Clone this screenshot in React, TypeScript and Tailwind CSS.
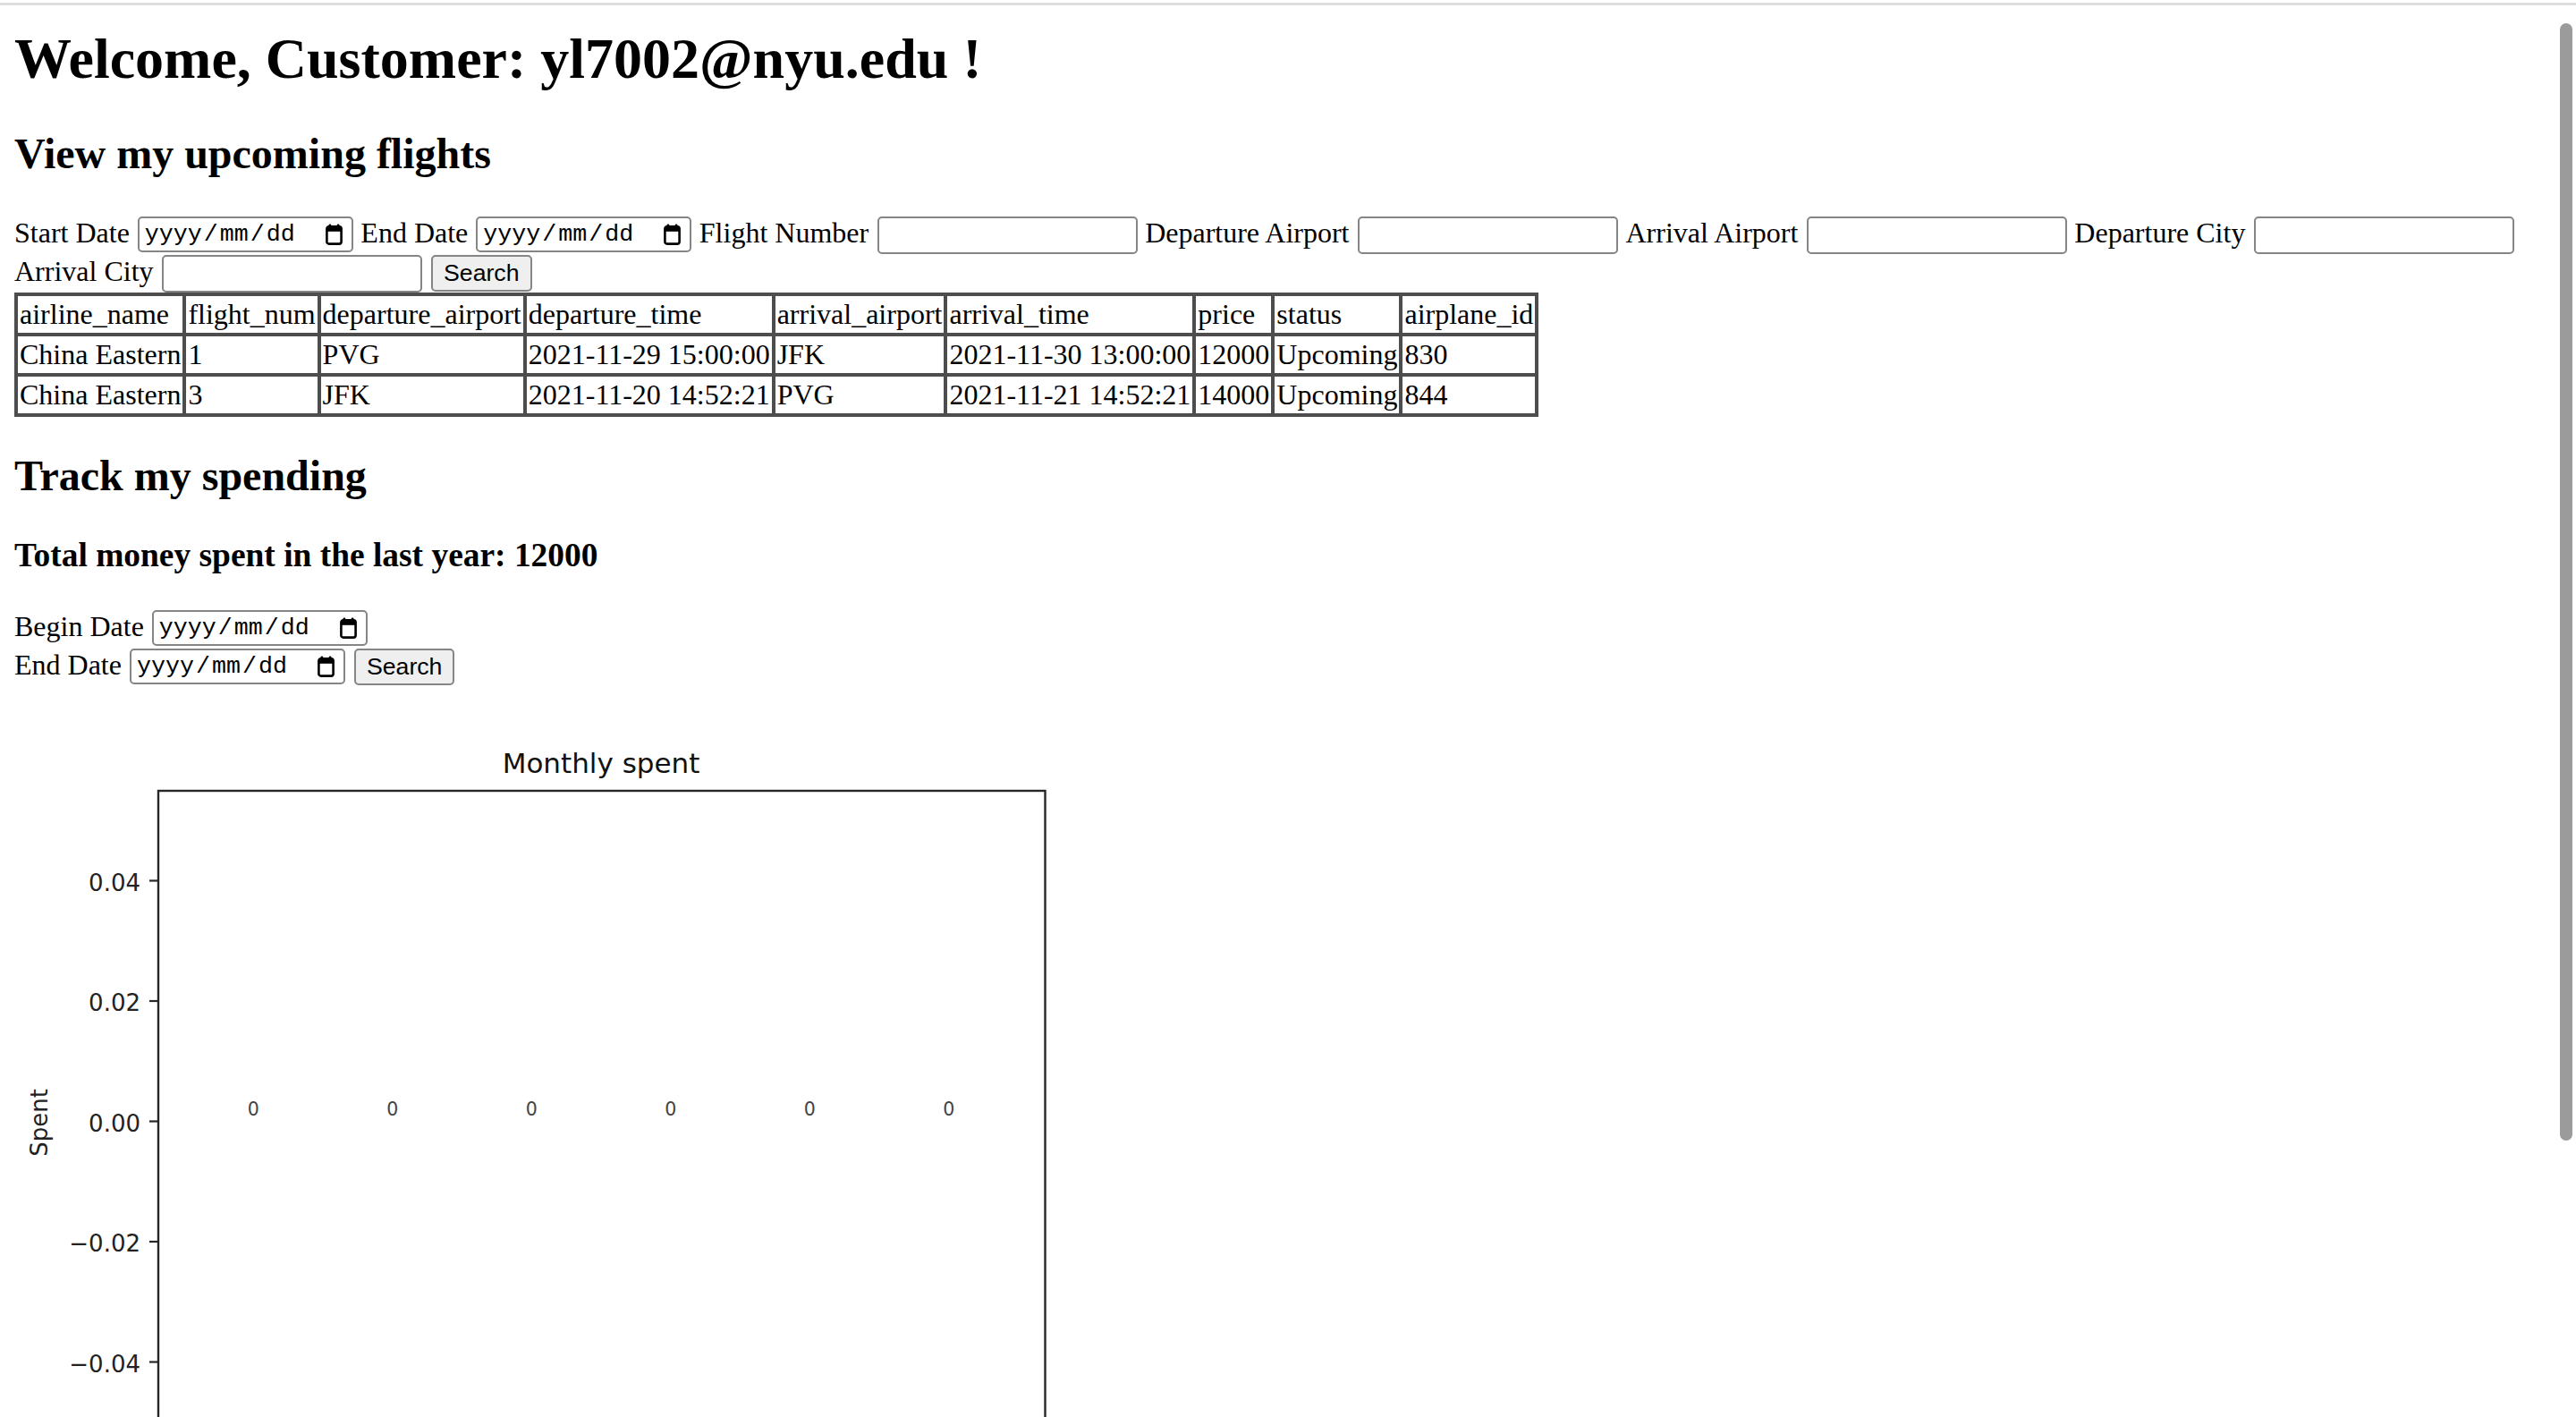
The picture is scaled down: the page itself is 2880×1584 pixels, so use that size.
import React from 'react';

const tableRows = [
  ['airline_name', 'flight_num', 'departure_airport', 'departure_time', 'arrival_airport', 'arrival_time', 'price', 'status', 'airplane_id'],
  ['China Eastern', '1', 'PVG', '2021-11-29 15:00:00', 'JFK', '2021-11-30 13:00:00', '12000', 'Upcoming', '830'],
  ['China Eastern', '3', 'JFK', '2021-11-20 14:52:21', 'PVG', '2021-11-21 14:52:21', '14000', 'Upcoming', '844'],
];

function Label({ text, first }: { text: string; first?: boolean }) {
  return <span className={`${first ? '' : 'ml-[8.5px]'} whitespace-nowrap leading-[36px]`}>{text}</span>;
}

function DateBox() {
  return (
    <div className="ml-[9px] flex h-[40px] w-[241px] shrink-0 items-center rounded-[5px] border-2 border-[#858585] pl-[6px] pr-[10px] font-['Liberation_Mono',monospace] text-[26.67px] text-black">
      <span>yyyy</span>
      <span className="mx-[2px]">/</span>
      <span>mm</span>
      <span className="mx-[2px]">/</span>
      <span>dd</span>
      <svg width="19" height="24" viewBox="0 0 19 24" className="ml-auto">
        <rect x="3.6" y="0.5" width="2.6" height="4.5" rx="1" fill="#000" />
        <rect x="12.8" y="0.5" width="2.6" height="4.5" rx="1" fill="#000" />
        <rect x="1.4" y="3.2" width="16.2" height="19.4" rx="2.4" fill="none" stroke="#000" strokeWidth="2.6" />
        <rect x="1.4" y="3.2" width="16.2" height="5.6" fill="#000" />
      </svg>
    </div>
  );
}

function TextBox() {
  return <div className="ml-[9.5px] h-[42px] w-[291px] shrink-0 rounded-[5px] border-2 border-[#858585] bg-white" />;
}

function SearchButton() {
  return (
    <button className="ml-[10px] flex h-[41px] shrink-0 items-center rounded-[5px] border-2 border-[#858585] bg-[#efefef] px-[12px] font-['Liberation_Sans',Arial,sans-serif] text-[26.67px] leading-none text-black">
      Search
    </button>
  );
}

function SpendChart() {
  const ticks = [
    { y: 215.5, label: '0.04' },
    { y: 350, label: '0.02' },
    { y: 484.5, label: '0.00' },
    { y: 619, label: '\u22120.02' },
    { y: 753.5, label: '\u22120.04' },
  ];
  const bars = [267.3, 422.8, 578.3, 733.8, 889.3, 1044.8];
  return (
    <svg width="1280" height="960" viewBox="0 0 1280 960" className="mt-[2px] block" fontFamily="'DejaVu Sans', sans-serif">
      <text x="656" y="95" textAnchor="middle" fontSize="31" fill="#111">Monthly spent</text>
      <rect x="161" y="115" width="991.5" height="739" fill="none" stroke="#262626" strokeWidth="2.4" />
      {ticks.map((t) => (
        <g key={t.label}>
          <line x1="151" x2="161" y1={t.y} y2={t.y} stroke="#262626" strokeWidth="2.2" />
          <text x="141" y={t.y + 11} textAnchor="end" fontSize="26" fill="#222">{t.label}</text>
        </g>
      ))}
      {bars.map((x, i) => (
        <text key={i} x={x} y="477.5" textAnchor="middle" fontSize="20.5" fill="#444">0</text>
      ))}
      <text transform="translate(37,486) rotate(-90)" textAnchor="middle" fontSize="26" fill="#222">Spent</text>
    </svg>
  );
}

export default function App() {
  return (
    <div className="relative h-[1584px] w-full overflow-hidden bg-white pt-[3px] font-['Liberation_Serif','Times_New_Roman',serif] text-[32px] text-black">
      <div className="h-[3px] bg-[#dedede]" />

      <div className="pl-[16px]">
        <h1 className="mt-[24px] text-[64px] font-bold leading-[71px]">Welcome, Customer: yl7002@nyu.edu !</h1>

        {/* Upcoming flights */}
        <h2 className="mt-[44px] text-[48px] font-bold leading-[53px]">View my upcoming flights</h2>
        <div className="mt-[44px] flex h-[43px] items-start">
          <Label text="Start Date" first />
          <DateBox />
          <Label text="End Date" />
          <DateBox />
          <Label text="Flight Number" />
          <TextBox />
          <Label text="Departure Airport" />
          <TextBox />
          <Label text="Arrival Airport" />
          <TextBox />
          <Label text="Departure City" />
          <TextBox />
        </div>
        <div className="flex h-[42px] items-start">
          <Label text="Arrival City" first />
          <TextBox />
          <SearchButton />
        </div>
        <table className="border-collapse">
          <tbody>
            {tableRows.map((row, i) => (
              <tr key={i}>
                {row.map((cell, j) => (
                  <td key={j} className="whitespace-nowrap border-4 border-[#4d4d4d] px-[2px] py-[2px] text-left leading-[37px]">
                    {cell}
                  </td>
                ))}
              </tr>
            ))}
          </tbody>
        </table>

        {/* Spending */}
        <h2 className="mt-[39px] text-[48px] font-bold leading-[53px]">Track my spending</h2>
        <h3 className="mt-[42px] text-[37.44px] font-bold leading-[41px]">Total money spent in the last year: 12000</h3>
        <div className="mt-[41px] flex h-[43px] items-start">
          <Label text="Begin Date" first />
          <DateBox />
        </div>
        <div className="flex h-[42px] items-start">
          <Label text="End Date" first />
          <DateBox />
          <SearchButton />
        </div>
        <SpendChart />
      </div>

      {/* scrollbar */}
      <div className="absolute right-[4px] top-[26px] h-[1249px] w-[14px] rounded-full bg-[#9b9b9b]" />
    </div>
  );
}
